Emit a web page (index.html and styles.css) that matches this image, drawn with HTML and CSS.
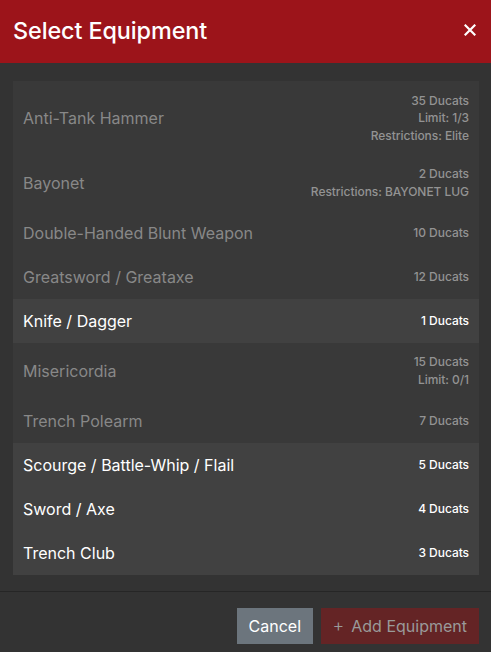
FILE: index.html
```
<!DOCTYPE html>
<html>
<head>
<meta charset="utf-8">
<link rel="stylesheet" href="styles.css">
</head>
<body>
<div class="modal">
  <header class="modal-header">
    <h1 class="modal-title">Select Equipment</h1>
    <button class="close" aria-label="Close">
      <svg width="12" height="12" viewBox="0 0 12 12"><path d="M1.5 1.5 L10.5 10.5 M10.5 1.5 L1.5 10.5" stroke="#fff" stroke-width="2.2" stroke-linecap="square"/></svg>
    </button>
  </header>
  <div class="modal-body">
    <ul class="list">
      <li class="item disabled"><span class="name">Anti-Tank Hammer</span><span class="meta"><span>35 Ducats</span><span>Limit: 1/3</span><span>Restrictions: Elite</span></span></li>
      <li class="item disabled"><span class="name">Bayonet</span><span class="meta"><span>2 Ducats</span><span>Restrictions: BAYONET LUG</span></span></li>
      <li class="item disabled"><span class="name">Double-Handed Blunt Weapon</span><span class="meta"><span>10 Ducats</span></span></li>
      <li class="item disabled"><span class="name">Greatsword / Greataxe</span><span class="meta"><span>12 Ducats</span></span></li>
      <li class="item active"><span class="name">Knife / Dagger</span><span class="meta"><span>1 Ducats</span></span></li>
      <li class="item disabled"><span class="name">Misericordia</span><span class="meta"><span>15 Ducats</span><span>Limit: 0/1</span></span></li>
      <li class="item disabled"><span class="name">Trench Polearm</span><span class="meta"><span>7 Ducats</span></span></li>
      <li class="item active"><span class="name">Scourge / Battle-Whip / Flail</span><span class="meta"><span>5 Ducats</span></span></li>
      <li class="item active"><span class="name">Sword / Axe</span><span class="meta"><span>4 Ducats</span></span></li>
      <li class="item active"><span class="name">Trench Club</span><span class="meta"><span>3 Ducats</span></span></li>
    </ul>
  </div>
  <footer class="modal-footer">
    <button class="btn btn-cancel">Cancel</button>
    <button class="btn btn-add" disabled><span class="plus">+</span>Add Equipment</button>
  </footer>
</div>
</body>
</html>
```
FILE: styles.css
```
* { box-sizing: border-box; }
html, body { margin: 0; padding: 0; }
body {
  background: #333333;
  font-family: Inter, "Noto Sans", sans-serif;
  color: #fff;
  width: 491px;
  height: 652px;
  overflow: hidden;
}
.modal { display: flex; flex-direction: column; }
.modal-header {
  height: 63px;
  background: #9c141a;
  display: flex;
  align-items: center;
  justify-content: space-between;
  padding: 0 15px 3px 13px;
}
.modal-title {
  margin: 0;
  font-size: 23.4px;
  font-weight: 500;
  letter-spacing: -0.1px;
}
.close {
  background: none;
  border: 0;
  padding: 0;
  display: flex;
  cursor: pointer;
}
.modal-body { padding: 18px 12px 16px 13px; }
.list {
  list-style: none;
  margin: 0;
  padding: 0;
  background: #393939;
}
.item {
  display: flex;
  justify-content: space-between;
  align-items: center;
  padding: 10.5px 10px;
  min-height: 44px;
}
.item.active { background: #414141; }
.name { font-size: 16px; line-height: 23px; position: relative; top: 1px; }
.meta {
  display: flex;
  flex-direction: column;
  align-items: flex-end;
  font-size: 12px;
  font-weight: 500;
  line-height: 17.5px;
  letter-spacing: -0.05px;
}
.item.disabled { color: #888888; }
.item.disabled .meta { color: #939393; }
.modal-footer {
  border-top: 1px solid #262626;
  display: flex;
  justify-content: flex-end;
  gap: 8px;
  padding: 16px 12px 8px;
}
.btn {
  height: 36px;
  border: 0;
  border-radius: 0;
  font-family: Inter, "Noto Sans", sans-serif;
  font-size: 16px;
  padding: 0 12px;
}
.btn-cancel { background: #6c757d; color: #fff; padding: 0 11.5px; }
.btn-add { background: #642425; color: #9a9a9a; padding: 0 12px; }
.plus { margin-right: 7px; font-weight: 300; font-size: 18px; }
```
